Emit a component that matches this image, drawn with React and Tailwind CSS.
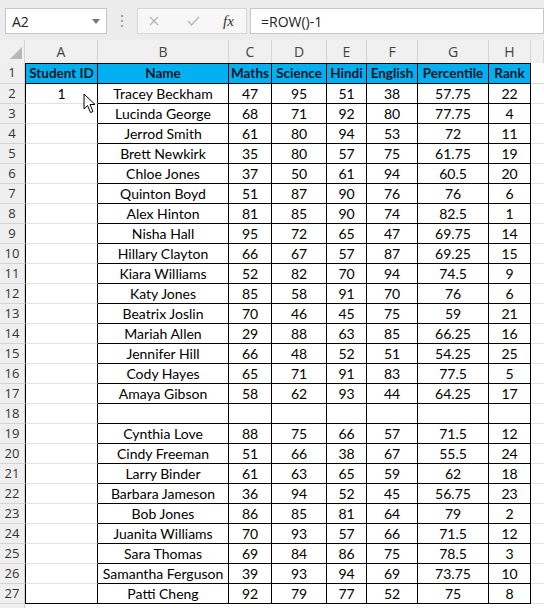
import React from "react";

const rows = [
  ["1", "Tracey Beckham", "47", "95", "51", "38", "57.75", "22"],
  ["", "Lucinda George", "68", "71", "92", "80", "77.75", "4"],
  ["", "Jerrod Smith", "61", "80", "94", "53", "72", "11"],
  ["", "Brett Newkirk", "35", "80", "57", "75", "61.75", "19"],
  ["", "Chloe Jones", "37", "50", "61", "94", "60.5", "20"],
  ["", "Quinton Boyd", "51", "87", "90", "76", "76", "6"],
  ["", "Alex Hinton", "81", "85", "90", "74", "82.5", "1"],
  ["", "Nisha Hall", "95", "72", "65", "47", "69.75", "14"],
  ["", "Hillary Clayton", "66", "67", "57", "87", "69.25", "15"],
  ["", "Kiara Williams", "52", "82", "70", "94", "74.5", "9"],
  ["", "Katy Jones", "85", "58", "91", "70", "76", "6"],
  ["", "Beatrix Joslin", "70", "46", "45", "75", "59", "21"],
  ["", "Mariah Allen", "29", "88", "63", "85", "66.25", "16"],
  ["", "Jennifer Hill", "66", "48", "52", "51", "54.25", "25"],
  ["", "Cody Hayes", "65", "71", "91", "83", "77.5", "5"],
  ["", "Amaya Gibson", "58", "62", "93", "44", "64.25", "17"],
  ["", "", "", "", "", "", "", ""],
  ["", "Cynthia Love", "88", "75", "66", "57", "71.5", "12"],
  ["", "Cindy Freeman", "51", "66", "38", "67", "55.5", "24"],
  ["", "Larry Binder", "61", "63", "65", "59", "62", "18"],
  ["", "Barbara Jameson", "36", "94", "52", "45", "56.75", "23"],
  ["", "Bob Jones", "86", "85", "81", "64", "79", "2"],
  ["", "Juanita Williams", "70", "93", "57", "66", "71.5", "12"],
  ["", "Sara Thomas", "69", "84", "86", "75", "78.5", "3"],
  ["", "Samantha Ferguson", "39", "93", "94", "69", "73.75", "10"],
  ["", "Patti Cheng", "92", "79", "77", "52", "75", "8"],
];

const widths = ["w-[131px]", "w-[43px]", "w-[55px]", "w-[40px]", "w-[51px]", "w-[71px]", "w-[42px]"];
const headers = ["Name", "Maths", "Science", "Hindi", "English", "Percentile", "Rank"];
const letters = ["B", "C", "D", "E", "F", "G", "H"];

const cellFont = { fontFamily: "Lato, 'Liberation Sans', sans-serif" };
const uiFont = { fontFamily: "'Open Sans', 'Noto Sans', sans-serif" };

function RowHeader({ n, tall }) {
  return (
    <div
      className={`w-[25px] shrink-0 ${tall ? "h-[21px]" : "h-[20px]"} bg-[#efefef] border-r border-b border-[#d4d4d4] flex items-center justify-center text-[13px] font-normal text-[#333]`}
      style={uiFont}
    >
      {n}
    </div>
  );
}

function Cursor() {
  return (
    <svg
      className="absolute left-[83px] top-[93px]"
      width="14"
      height="22"
      viewBox="0 0 14 22"
    >
      <path
        d="M1 1 L1 16 L4.5 12.5 L7.5 19.5 L10 18.5 L7 11.5 L12 11.5 Z"
        fill="#fff"
        stroke="#000"
        strokeWidth="1"
        strokeLinejoin="round"
      />
    </svg>
  );
}

export default function App() {
  return (
    <div className="relative w-[544px] h-[608px] overflow-hidden bg-white">
      {/* Formula bar */}
      <div className="h-[40px] bg-[#ececec] flex items-start pt-[8px] pl-[5px]">
        <div
          className="w-[102px] h-[26px] bg-white border border-[#c6c6c6] flex items-center justify-between pl-[6px] pr-[6px] text-[14px] text-[#222]"
          style={uiFont}
        >
          <span>A2</span>
          <svg width="8" height="5" viewBox="0 0 8 5">
            <path d="M0 0 L8 0 L4 5 Z" fill="#777" />
          </svg>
        </div>
        <div className="w-[30px] h-[26px] flex flex-col items-center justify-center gap-[3px]">
          <div className="w-[2px] h-[2px] bg-[#a0a0a0]" />
          <div className="w-[2px] h-[2px] bg-[#a0a0a0]" />
          <div className="w-[2px] h-[2px] bg-[#a0a0a0]" />
        </div>
        <div className="w-[110px] h-[26px] bg-[#f7f7f7] border border-[#d6d6d6] flex items-center">
          <svg className="ml-[11px]" width="10" height="10" viewBox="0 0 10 10">
            <path d="M1 1 L9 9 M9 1 L1 9" stroke="#b5b5b5" strokeWidth="1.3" />
          </svg>
          <svg className="ml-[28px]" width="13" height="10" viewBox="0 0 13 10">
            <path d="M1 5 L4.5 9 L12 1" stroke="#b5b5b5" strokeWidth="1.4" fill="none" />
          </svg>
          <span
            className="ml-[23px] text-[15px] italic text-[#333]"
            style={{ fontFamily: "'Liberation Serif', serif" }}
          >
            fx
          </span>
        </div>
        <div
          className="ml-[3px] flex-1 h-[26px] bg-white border border-[#c6c6c6] flex items-center pl-[10px] text-[14px] text-[#222]"
          style={uiFont}
        >
          =ROW()-1
        </div>
      </div>

      {/* Column headers */}
      <div className="flex h-[23px] bg-[#f0f0f0] text-[14px] text-[#444]" style={uiFont}>
        <div className="relative w-[25px] shrink-0 border-r border-[#d4d4d4]">
          <svg className="absolute left-[10px] top-[7px]" width="12" height="12" viewBox="0 0 12 12">
            <path d="M12 0 L12 12 L0 12 Z" fill="#b8b8b8" />
          </svg>
        </div>
        <div className="w-[73px] shrink-0 border-r border-[#d4d4d4] flex items-center justify-center">A</div>
        {letters.map((l, i) => (
          <div
            key={l}
            className={`${widths[i]} shrink-0 border-r border-[#d4d4d4] flex items-center justify-center`}
          >
            {l}
          </div>
        ))}
        <div className="flex-1 border-r border-[#d4d4d4]" />
      </div>

      {/* Row 1 headers */}
      <div className="flex text-[13.5px] font-bold text-[#0b1626]" style={cellFont}>
        <RowHeader n={1} tall />
        <div className="w-[73px] h-[21px] shrink-0 bg-[#00b0f0] border border-black flex items-center justify-center leading-none pt-[1px]">
          Student ID
        </div>
        {headers.map((h, i) => (
          <div
            key={h}
            className={`${widths[i]} h-[21px] shrink-0 bg-[#00b0f0] border-t border-r border-b border-black flex items-center justify-center leading-none pt-[1px]`}
          >
            {h}
          </div>
        ))}
        <div className="flex-1 h-[21px] border-b border-[#dadada]" />
      </div>

      {/* Data rows */}
      {rows.map((r, idx) => {
        const n = idx + 2;
        const last = n === 27;
        return (
          <div key={n} className="flex text-[14px] text-black" style={cellFont}>
            <RowHeader n={n} />
            <div
              className={`w-[73px] h-[20px] shrink-0 border-l border-r border-b border-l-black border-r-black ${last ? "border-b-black" : "border-b-[#e2e2e2]"} flex items-center justify-center leading-none pt-[1px]`}
            >
              {r[0]}
            </div>
            {r.slice(1).map((v, i) => (
              <div
                key={i}
                className={`${widths[i]} h-[20px] shrink-0 border-r border-b border-black flex items-center justify-center leading-none whitespace-nowrap pt-[1px]`}
              >
                {v}
              </div>
            ))}
            <div className="flex-1 h-[20px] border-b border-[#e2e2e2]" />
          </div>
        );
      })}

      {/* Row 28 */}
      <div className="flex" style={cellFont}>
        <RowHeader n={28} />
        <div className="flex-1 h-[20px] border-b border-[#e2e2e2]" />
      </div>

      <Cursor />
    </div>
  );
}
